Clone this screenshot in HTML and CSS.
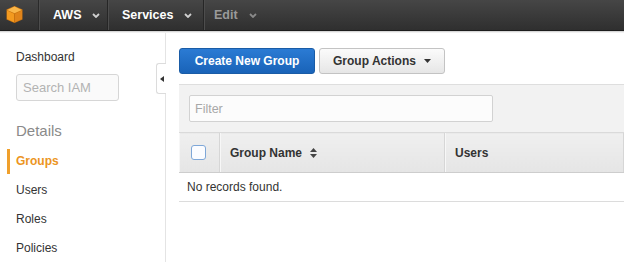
FILE: index.html
```html
<!DOCTYPE html>
<html lang="en">
<head>
    <meta charset="UTF-8">
    <title>IAM - Groups</title>
    <link rel="stylesheet" href="styles.css">
</head>
<body>
    <div class="topbar">
        <div class="logo">
            <svg width="19" height="19" viewBox="0 0 19 19">
                <polygon points="9.5,1 17.5,4.6 17.5,14.4 9.5,18 1.5,14.4 1.5,4.6" fill="#c9730f"/>
                <polygon points="9.5,1.6 16.8,4.9 9.5,8.2 2.2,4.9" fill="#f9b649"/>
                <polygon points="2,5.6 9,8.8 9,17.2 2,14" fill="#f39a1f"/>
                <polygon points="10,8.8 17,5.6 17,14 10,17.2" fill="#e0841a"/>
            </svg>
        </div>
        <div class="menu aws">AWS
            <svg class="chev" width="8" height="5" viewBox="0 0 8 5"><polyline points="1,1 4,4 7,1" fill="none" stroke="#d0d0d0" stroke-width="1.8"/></svg>
        </div>
        <div class="menu services">Services
            <svg class="chev" width="8" height="5" viewBox="0 0 8 5"><polyline points="1,1 4,4 7,1" fill="none" stroke="#d0d0d0" stroke-width="1.8"/></svg>
        </div>
        <div class="menu edit">Edit
            <svg class="chev" width="8" height="5" viewBox="0 0 8 5"><polyline points="1,1 4,4 7,1" fill="none" stroke="#8a8a8a" stroke-width="1.8"/></svg>
        </div>
    </div>

    <div class="layout">
        <div class="sidebar">
            <div class="dash">Dashboard</div>
            <input class="search" type="text" placeholder="Search IAM">
            <div class="section">Details</div>
            <ul class="nav">
                <li class="active"><span>Groups</span></li>
                <li><span>Users</span></li>
                <li><span>Roles</span></li>
                <li><span>Policies</span></li>
            </ul>
            <div class="collapse">
                <svg width="4" height="6" viewBox="0 0 4 6"><polygon points="4,0 4,6 0,3" fill="#333"/></svg>
            </div>
        </div>

        <div class="main">
            <div class="toolbar">
                <button class="btn primary">Create New Group</button>
                <button class="btn">Group Actions
                    <svg width="7" height="4" viewBox="0 0 7 4"><polygon points="0,0 7,0 3.5,4" fill="#333"/></svg>
                </button>
            </div>

            <div class="filter-bar">
                <input class="filter" type="text" placeholder="Filter">
            </div>

            <table class="grid">
                <thead>
                    <tr>
                        <th class="col-check"><span class="checkbox"></span></th>
                        <th class="col-name">Group Name
                            <svg class="sort" width="7" height="10" viewBox="0 0 7 10"><polygon points="3.5,0 7,4 0,4" fill="#444"/><polygon points="0,6 7,6 3.5,10" fill="#444"/></svg>
                        </th>
                        <th class="col-users">Users</th>
                        <th class="col-more"></th>
                    </tr>
                </thead>
                <tbody>
                    <tr>
                        <td class="empty" colspan="4">No records found.</td>
                    </tr>
                </tbody>
            </table>
        </div>
    </div>
</body>
</html>
```

FILE: styles.css
```css
body {
    margin: 0;
    font-family: "Liberation Sans", Arial, sans-serif;
    font-size: 12px;
    color: #333;
    background: #fff;
    overflow: hidden;
}

.topbar {
    display: flex;
    height: 30px;
    background: linear-gradient(#464646, #2f2f2f);
    border-bottom: 1px solid #1c1c1c;
    box-shadow: 0 1px 0 #d6d6d6, 0 2px 0 #f1f1f1;
    position: relative;
    z-index: 1;
}
.logo {
    width: 39px;
    padding: 5px 0 0 5px;
    box-sizing: border-box;
    border-right: 1px solid #2a2a2a;
}
.menu {
    display: flex;
    align-items: center;
    font-size: 12.5px;
    font-weight: bold;
    color: #fff;
    border-left: 1px solid #4d4d4d;
    border-right: 1px solid #262626;
}
.menu .chev {
    margin-left: 11px;
}
.aws {
    width: 69px;
    padding-left: 13px;
    box-sizing: border-box;
}
.services {
    width: 96px;
    padding-left: 13px;
    box-sizing: border-box;
}
.edit {
    padding-left: 9px;
    color: #9a9a9a;
    border-right: none;
}

.layout {
    display: flex;
    height: calc(100vh - 31px);
}

.sidebar {
    position: relative;
    width: 166px;
    flex-shrink: 0;
    padding: 16px 0 0 16px;
    box-sizing: border-box;
    border-right: 1px solid #e4e4e4;
}
.dash {
    line-height: 20px;
    color: #333;
}
.search {
    display: block;
    margin-top: 7px;
    width: 103px;
    height: 27px;
    box-sizing: border-box;
    padding: 0 6px;
    border: 1px solid #d6d6d6;
    border-radius: 3px;
    background: #fafafa;
    font-family: inherit;
    font-size: 13px;
}
.search::placeholder {
    color: #b3b3b3;
}
.section {
    margin-top: 20px;
    font-size: 15px;
    line-height: 20px;
    color: #8a8a8a;
}
.nav {
    list-style: none;
    margin: 6px 0 0;
    padding: 0;
}
.nav li {
    padding: 2px 0;
}
.nav li span {
    display: block;
    line-height: 25px;
}
.nav li.active span {
    margin-left: -9px;
    padding-left: 6px;
    border-left: 3px solid #f0a02c;
    color: #ec9522;
    font-weight: bold;
}
.collapse {
    position: absolute;
    top: 32px;
    right: -1px;
    width: 9px;
    height: 29px;
    display: flex;
    align-items: center;
    justify-content: center;
    background: #fff;
    border: 1px solid #dcdcdc;
    border-right: none;
    border-radius: 3px 0 0 3px;
}

.main {
    flex: 1;
    padding: 17px 0 0 13px;
    overflow: hidden;
}
.toolbar {
    display: flex;
    gap: 4px;
}
.btn {
    height: 26px;
    padding: 0 13px;
    border: 1px solid #c3c3c3;
    border-radius: 3px;
    background: linear-gradient(#fbfbfb, #e6e6e6);
    font-family: inherit;
    font-size: 12px;
    font-weight: bold;
    color: #333;
    display: flex;
    align-items: center;
    gap: 8px;
}
.btn.primary {
    width: 136px;
    justify-content: center;
    background: linear-gradient(#2b7bd4, #1963b8);
    border-color: #1a5ca6;
    color: #fff;
}

.filter-bar {
    margin-top: 10px;
    width: 640px;
    padding: 10px 0 10px 10px;
    background: #f2f2f2;
    border-top: 1px solid #dedede;
}
.filter {
    display: block;
    width: 304px;
    height: 27px;
    box-sizing: border-box;
    padding: 0 5px;
    border: 1px solid #d2d2d2;
    border-radius: 2px;
    background: #fcfcfc;
    font-family: inherit;
    font-size: 12.5px;
}
.filter::placeholder {
    color: #a8a8a8;
}

.grid {
    width: 650px;
    border-collapse: collapse;
    table-layout: fixed;
}
.grid th {
    height: 39px;
    padding: 0 0 0 10px;
    text-align: left;
    font-size: 12px;
    font-weight: bold;
    color: #333;
    background: linear-gradient(#efefef, #e5e5e5);
    border-top: 1px solid #dadada;
    border-bottom: 1px solid #cdcdcd;
    border-left: 1px solid #d6d6d6;
    box-shadow: inset 1px 0 0 #f7f7f7;
}
.grid th:first-child {
    border-left: none;
}
.col-check {
    width: 30px;
}
.col-name {
    width: 214px;
}
.col-users {
    width: 168px;
}
.checkbox {
    display: block;
    margin-left: 2px;
    width: 13px;
    height: 13px;
    border: 1.5px solid #7ea7d8;
    border-radius: 3px;
    background: #fbfcff;
}
.sort {
    margin-left: 5px;
    vertical-align: -1px;
}
.empty {
    height: 28px;
    padding: 0 0 0 8px;
    color: #333;
    border-bottom: 1px solid #dcdcdc;
}
```
